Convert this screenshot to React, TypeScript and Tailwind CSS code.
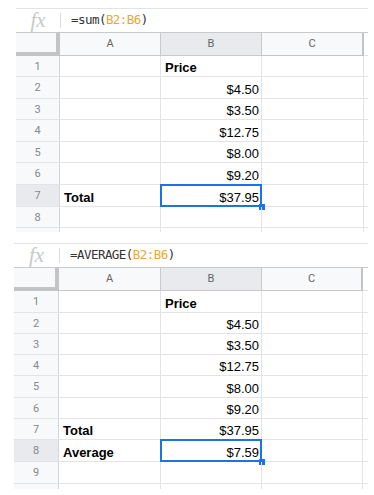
type Row = {
  n: string;
  a?: string;
  b?: string;
  h: string;
  sel?: boolean;
};

type Cols = { hdr: string; a: string; b: string; c: string };

const sans = "font-['Liberation_Sans',Arial,sans-serif]";

function Formula({ fn, cols }: { fn: string; cols: Cols }) {
  return (
    <div className="flex h-[24px] items-center border-t border-[#e3e3e3]">
      <div className={`${cols.hdr} flex justify-center font-['Liberation_Serif',serif] text-[21px] italic leading-none text-[#c8c8c8]`}>
        fx
      </div>
      <div className="h-[15px] w-px bg-[#dcdcdc]" />
      <div className="pl-[10px] font-['DejaVu_Sans_Mono',monospace] text-[12.5px] leading-none tracking-[-0.55px] text-[#333]">
        {fn}(<span className="text-[#e9a53a]">B2:B6</span>)
      </div>
    </div>
  );
}

function Sheet({ fn, cols, rows, tail }: { fn: string; cols: Cols; rows: Row[]; tail: string }) {
  return (
    <div className={sans}>
      <Formula fn={fn} cols={cols} />
      {/* column headers */}
      <div className="flex h-[24px] border-t border-[#c9c9c9] text-[11px] text-[#666]">
        <div className={`${cols.hdr} border-r-[4px] border-b-[4px] border-[#c4c4c4] bg-[#f8f9fa]`} />
        <div className={`${cols.a} flex items-center justify-center border-r border-b border-[#c9c9c9] bg-[#f8f9fa] font-['Roboto',sans-serif]`}>A</div>
        <div className={`${cols.b} flex items-center justify-center border-r border-b border-[#c9c9c9] bg-[#e8eaed] font-['Roboto',sans-serif]`}>B</div>
        <div className={`${cols.c} flex items-center justify-center border-r-[2px] border-b border-[#c4c4c4] bg-[#f8f9fa] font-['Roboto',sans-serif]`}>C</div>
        <div className="flex-1 border-b border-[#e3e3e3]" />
      </div>
      {rows.map((r) => (
        <div key={r.n} className={`flex ${r.h} border-b border-[#e3e3e3] text-[13px] text-black`}>
          <div
            className={`${cols.hdr} flex items-center justify-center border-r border-[#d6d6d6] pt-[2px] font-['Roboto',sans-serif] text-[11px] text-[#888] ${r.sel ? "bg-[#e8eaed]" : "bg-[#f8f9fa]"}`}
          >
            {r.n}
          </div>
          <div className={`${cols.a} flex items-end border-r border-[#e3e3e3] pb-[1px] pl-[4px] font-bold leading-[14px]`}>
            {r.a}
          </div>
          <div
            className={`${cols.b} relative flex items-end border-r border-[#e3e3e3] pb-[1px] pr-[2px] leading-[14px] ${r.n === "1" ? "justify-start pl-[4px] font-bold" : "justify-end"}`}
          >
            {r.b}
            {r.sel && (
              <>
                <div className="absolute -top-px -left-px -right-px -bottom-px border-2 border-[#1a73e8]" />
                <div className="absolute -right-[4px] -bottom-[4px] h-[6px] w-[6px] bg-[#1a73e8]" />
              </>
            )}
          </div>
          <div className={`${cols.c} border-r border-[#e3e3e3]`} />
          <div className="flex-1" />
        </div>
      ))}
      {/* cropped next row */}
      <div className={`flex ${tail}`}>
        <div className={`${cols.hdr} border-r border-[#d6d6d6] bg-[#f8f9fa]`} />
        <div className={`${cols.a} border-r border-[#e3e3e3]`} />
        <div className={`${cols.b} border-r border-[#e3e3e3]`} />
        <div className={`${cols.c} border-r border-[#e3e3e3]`} />
      </div>
    </div>
  );
}

const prices = ["$4.50", "$3.50", "$12.75", "$8.00", "$9.20"];

export default function App() {
  const top: Row[] = [
    { n: "1", b: "Price", h: "h-[21px]" },
    ...prices.map((p, i) => ({ n: String(i + 2), b: p, h: i % 2 === 0 ? "h-[22px]" : "h-[21px]" })),
    { n: "7", a: "Total", b: "$37.95", h: "h-[22px]", sel: true },
    { n: "8", h: "h-[21px]" },
  ];
  const bottom: Row[] = [
    { n: "1", b: "Price", h: "h-[22px]" },
    ...prices.map((p, i) => ({ n: String(i + 2), b: p, h: i === 3 ? "h-[22px]" : "h-[21px]" })),
    { n: "7", a: "Total", b: "$37.95", h: "h-[21px]" },
    { n: "8", a: "Average", b: "$7.59", h: "h-[22px]", sel: true },
    { n: "9", h: "h-[22px]" },
  ];

  return (
    <div className="h-[495px] w-[374px] overflow-hidden bg-white">
      <div className="ml-[16px] w-[352px] pt-[8px]">
        <Sheet
          fn="=sum"
          cols={{ hdr: "w-[44px]", a: "w-[101px]", b: "w-[101px]", c: "w-[102px]" }}
          rows={top}
          tail="h-[4px]"
        />
      </div>
      <div className="ml-[14px] mt-[11px] w-[354px]">
        <Sheet
          fn="=AVERAGE"
          cols={{ hdr: "w-[45px]", a: "w-[102px]", b: "w-[101px]", c: "w-[101px]" }}
          rows={bottom}
          tail="h-[5px]"
        />
      </div>
    </div>
  );
}
